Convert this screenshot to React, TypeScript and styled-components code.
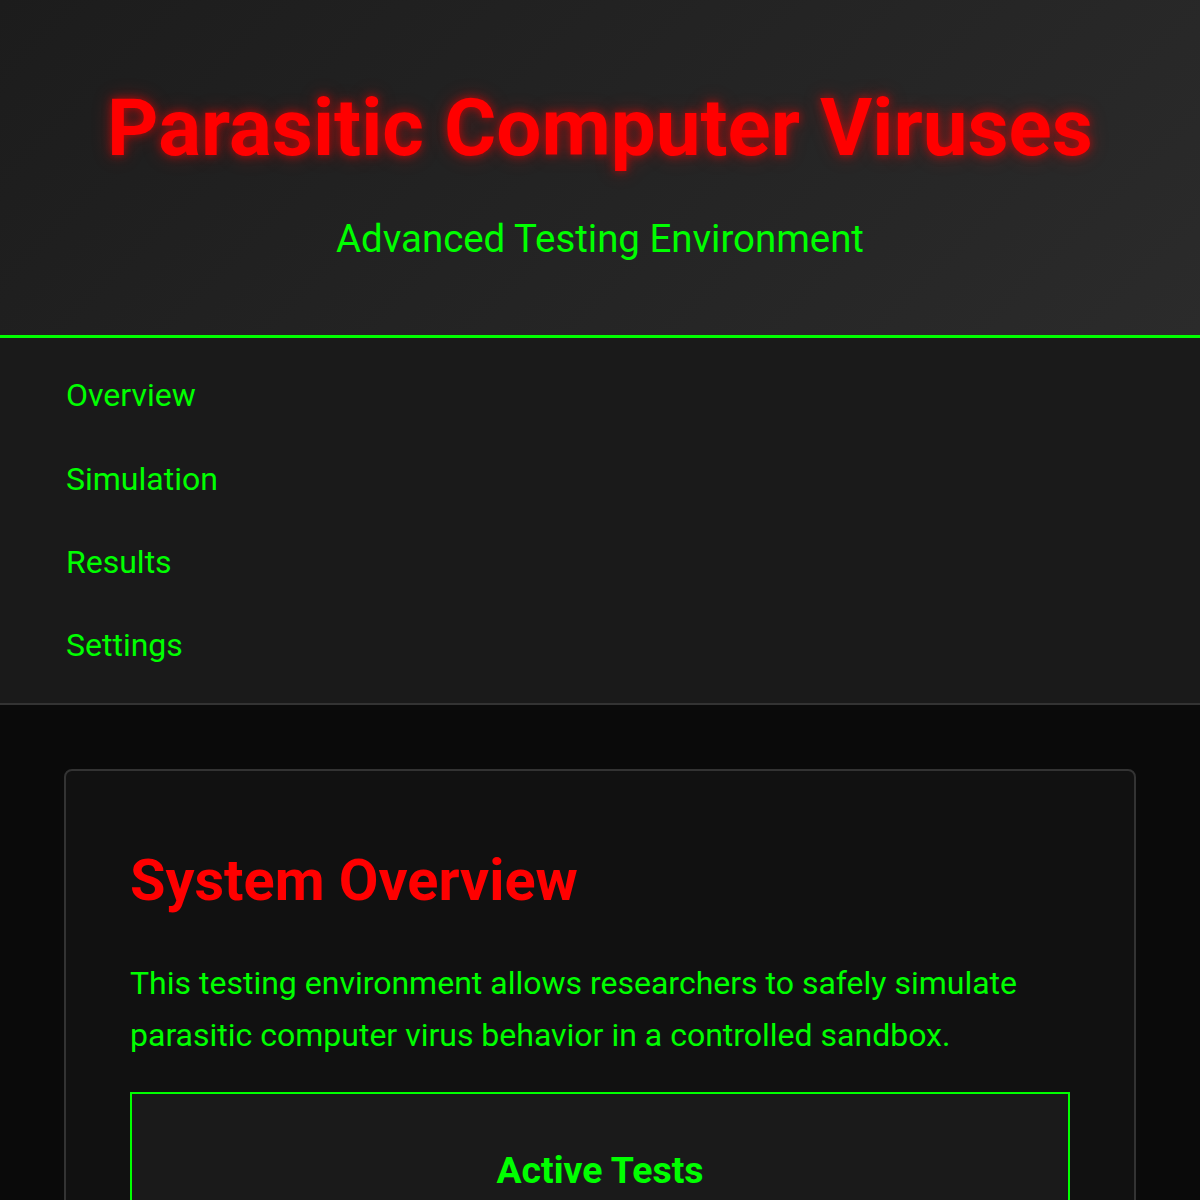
import styled, { createGlobalStyle } from 'styled-components'

const navItems = ['Overview', 'Simulation', 'Results', 'Settings']

function App() {
  return (
    <>
      <GlobalStyle />
      <Header>
        <Title>Parasitic Computer Viruses</Title>
        <Subtitle>Advanced Testing Environment</Subtitle>
      </Header>
      <Nav>
        {navItems.map((item) => (
          <NavLink key={item} href="#">
            {item}
          </NavLink>
        ))}
      </Nav>
      <Main>
        <Card>
          <CardTitle>System Overview</CardTitle>
          <Text>
            This testing environment allows researchers to safely simulate
            parasitic computer virus behavior in a controlled sandbox.
          </Text>
          <TestPanel>
            <PanelTitle>Active Tests</PanelTitle>
          </TestPanel>
        </Card>
      </Main>
    </>
  )
}

const GlobalStyle = createGlobalStyle`
  * {
    box-sizing: border-box;
  }

  body {
    margin: 0;
    background: #0a0a0a;
    font-family: Roboto, 'Noto Sans', sans-serif;
    line-height: 1.6;
    color: #00ff00;
  }
`

const Header = styled.header`
  padding: 64px 32px 66px;
  background: linear-gradient(135deg, #1c1c1c 0%, #2b2b2b 100%);
  border-bottom: 3px solid #00ff00;
  text-align: center;
`

const Title = styled.h1`
  margin: 0 0 16px;
  font-size: 80px;
  font-weight: 700;
  color: #ff0000;
  text-shadow: 0 0 10px rgba(255, 0, 0, 0.6), 0 0 20px rgba(255, 0, 0, 0.3);
`

const Subtitle = styled.p`
  margin: 0;
  font-size: 38.4px;
  color: #00ff00;
`

const Nav = styled.nav`
  display: flex;
  flex-direction: column;
  padding: 16px 66px;
  background: #1a1a1a;
  border-bottom: 2px solid #333;
`

const NavLink = styled.a`
  padding: 16px 0;
  font-size: 32px;
  color: #00ff00;
  text-decoration: none;
`

const Main = styled.main`
  padding: 64px;
`

const Card = styled.section`
  padding: 64px;
  background: #111;
  border: 2px solid #333;
  border-radius: 8px;
`

const CardTitle = styled.h2`
  margin: 0 0 31px;
  font-size: 57.6px;
  font-weight: 700;
  color: #ff0000;
`

const Text = styled.p`
  margin: 0 0 31px;
  font-size: 32px;
  color: #00ff00;
`

const TestPanel = styled.div`
  padding: 47px 48px 48px;
  background: #1a1a1a;
  border: 2px solid #00ff00;
  text-align: center;
`

const PanelTitle = styled.h3`
  margin: 0 0 32px;
  font-size: 37.4px;
  font-weight: 700;
  color: #00ff00;
`

export default App
